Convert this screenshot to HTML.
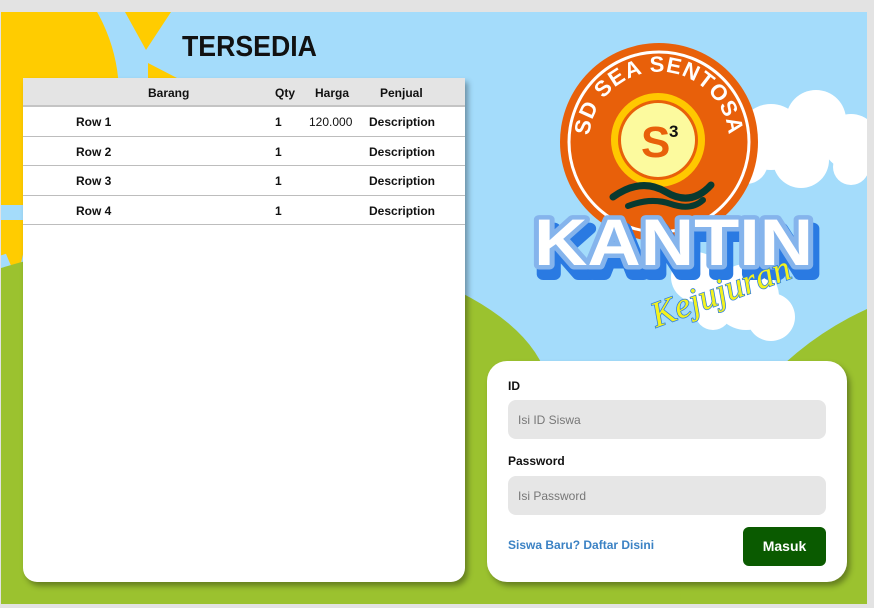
<!DOCTYPE html>
<html><head><meta charset="utf-8"><style>
*{margin:0;padding:0;box-sizing:border-box}
html,body{width:874px;height:608px;overflow:hidden}
body{background:#e3e3e3;position:relative;font-family:"Liberation Sans",sans-serif}
#bg{position:absolute;left:1px;top:12px;width:866px;height:592px;overflow:hidden}
.title{position:absolute;left:181px;top:19px;font-size:29px;font-weight:900;color:#111;transform:scaleX(.92);transform-origin:left}
.tbl{position:absolute;left:23px;top:78px;width:442px;height:504px;background:#fff;border-radius:0 0 14px 14px;box-shadow:3px 4px 6px rgba(0,0,0,.35);overflow:hidden;font-size:12px;font-weight:bold;color:#111}
.hd{height:29px;background:#e4e4e4;border-bottom:2px solid #c4c4c4;position:relative}
.row{height:29.5px;border-bottom:1px solid #bdbdbd;position:relative}
.c{position:absolute;top:8px}
.card{position:absolute;left:487px;top:361px;width:360px;height:221px;background:#fff;border-radius:20px;box-shadow:3px 4px 6px rgba(0,0,0,.35)}
.lbl{position:absolute;font-size:12px;font-weight:bold;color:#111}
.inp{position:absolute;left:21px;width:318px;height:39px;background:#e6e6e6;border-radius:8px;font-size:12px;color:#777;padding:13px 0 0 10px}
.btn{position:absolute;left:256px;top:166px;width:83px;height:39px;background:#0a5a00;border-radius:6px;color:#fff;font-weight:bold;font-size:14px;text-align:center;line-height:39px}
</style></head><body>
<div id="bg">
<svg width="866" height="592" style="position:absolute;left:0;top:0">
<rect width="866" height="592" fill="#a4dcfb"/>
<circle cx="-50" cy="83" r="168" fill="#ffcc00"/>
<rect x="0" y="193" width="30" height="15" fill="#a4dcfb"/>
<polygon points="0,208 30,208 16,268 0,230" fill="#ffcc00"/>
<polygon points="124,0 170,0 145,38" fill="#ffcc00"/>
<polygon points="147,51 176,66 147,70" fill="#ffcc00"/>
<ellipse cx="199" cy="386" rx="350" ry="158" fill="#9bc22f"/>
<rect x="-160" y="386" width="1100" height="210" fill="#9bc22f"/>
<circle cx="999" cy="588" r="320" fill="#9bc22f"/>
<g fill="#fff">
<circle cx="770" cy="125" r="33"/><circle cx="815" cy="108" r="30"/><circle cx="850" cy="130" r="28"/><circle cx="800" cy="148" r="28"/><circle cx="745" cy="150" r="22"/><circle cx="850" cy="155" r="18"/>
<circle cx="745" cy="285" r="33"/><circle cx="712" cy="300" r="18"/><circle cx="770" cy="305" r="24"/><circle cx="695" cy="265" r="25"/>
</g>
<circle cx="658" cy="130" r="99" fill="#e8600a"/>
<circle cx="658" cy="130" r="90" fill="none" stroke="#fff" stroke-width="3"/>
<path id="arc" d="M591,150 A70,70 0 1 1 725,150" fill="none"/>
<text font-size="22" font-weight="900" fill="#fff" letter-spacing="1"><textPath href="#arc" startOffset="50%" text-anchor="middle">SD SEA SENTOSA</textPath></text>
<circle cx="657" cy="128" r="47" fill="#ffc800"/>
<circle cx="657" cy="128" r="40" fill="#e8600a"/>
<circle cx="657" cy="128" r="37" fill="#fcfa9e"/>
<text x="640" y="145" font-size="44" font-weight="bold" fill="#e8600a">S</text>
<text x="668" y="125" font-size="17" font-weight="bold" fill="#111">3</text>
<path d="M612,185 Q640,165 665,180 T710,173" fill="none" stroke="#083a30" stroke-width="7" stroke-linecap="round"/>
<path d="M627,194 Q650,185 670,192 T702,188" fill="none" stroke="#083a30" stroke-width="6" stroke-linecap="round"/>
<g transform="translate(533,0) scale(1.12,1)">
<text x="4" y="262" font-size="66" font-weight="900" fill="#2a7ae2" stroke="#2a7ae2" stroke-width="12" stroke-linejoin="round">KANTIN</text>
<text x="0" y="253" font-size="66" font-weight="900" fill="#fff" stroke="#85b4ec" stroke-width="9" stroke-linejoin="round" paint-order="stroke">KANTIN</text>
</g>
<text x="640" y="290" font-size="36" font-style="italic" fill="#f3f21e" stroke="#2a7ae2" stroke-width="1.5" paint-order="stroke" font-family="Liberation Serif" transform="rotate(-20 720 260)">Kejujuran</text>
</svg>
<div class="title">TERSEDIA</div>
</div>
<div class="tbl">
<div class="hd"><span class="c" style="left:125px">Barang</span><span class="c" style="left:252px">Qty</span><span class="c" style="left:292px">Harga</span><span class="c" style="left:357px">Penjual</span></div>
<div class="row"><span class="c" style="left:53px">Row 1</span><span class="c" style="left:252px">1</span><span class="c" style="left:286px;font-weight:normal">120.000</span><span class="c" style="left:346px">Description</span></div>
<div class="row"><span class="c" style="left:53px">Row 2</span><span class="c" style="left:252px">1</span><span class="c" style="left:346px">Description</span></div>
<div class="row"><span class="c" style="left:53px">Row 3</span><span class="c" style="left:252px">1</span><span class="c" style="left:346px">Description</span></div>
<div class="row"><span class="c" style="left:53px">Row 4</span><span class="c" style="left:252px">1</span><span class="c" style="left:346px">Description</span></div>
</div>
<div class="card">
<div class="lbl" style="left:21px;top:18px">ID</div>
<div class="inp" style="top:39px">Isi ID Siswa</div>
<div class="lbl" style="left:21px;top:93px">Password</div>
<div class="inp" style="top:115px">Isi Password</div>
<div class="lbl" style="left:21px;top:177px;color:#3b82c4">Siswa Baru? Daftar Disini</div>
<div class="btn">Masuk</div>
</div>
</body></html>
